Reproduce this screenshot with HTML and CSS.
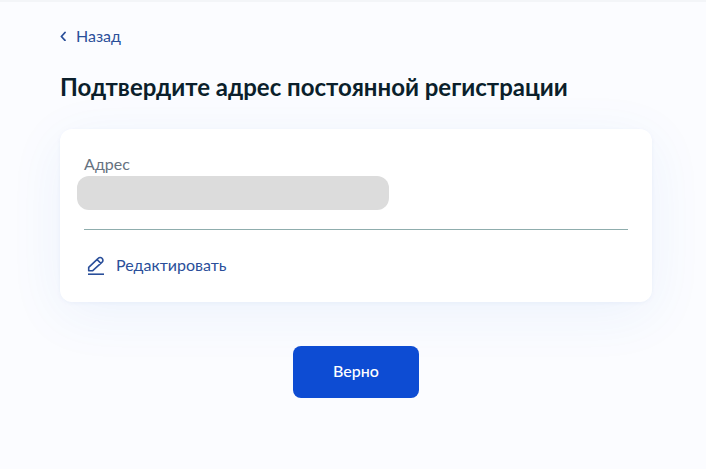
FILE: index.html
```html
<!DOCTYPE html>
<html lang="ru">
<head>
  <meta charset="UTF-8">
  <meta name="viewport" content="width=device-width, initial-scale=1.0">
  <title>Подтвердите адрес постоянной регистрации</title>
  <link rel="stylesheet" href="styles.css">
</head>
<body>
  <main class="page">
    <a href="#" class="back">
      <svg class="back-icon" width="6" height="10" viewBox="0 0 6 10" fill="none" stroke="currentColor" stroke-width="1.8" stroke-linecap="round" stroke-linejoin="round">
        <path d="M5 1.500 1.400 5.500 5 9.300"/>
      </svg>
      Назад
    </a>

    <h1>Подтвердите адрес постоянной регистрации</h1>

    <section class="card">
      <div class="label">Адрес</div>
      <div class="address"></div>
      <button type="button" class="edit">
        <svg width="24" height="24" viewBox="0 0 24 24" fill="none" stroke="currentColor" stroke-width="1.6" stroke-linejoin="round">
          <path d="M4 21.200h16"/>
          <path d="M4.700 17.800V14.300L14.200 5.300a2.700 2.700 0 0 1 3.900 0 2.700 2.700 0 0 1 0 3.900L8.500 17.800zM13 6.500l3.900 3.900"/>
        </svg>
        Редактировать
      </button>
    </section>

    <button type="button" class="submit">Верно</button>
  </main>
</body>
</html>
```
FILE: styles.css
```css
* {
  box-sizing: border-box;
}
body {
  margin: 0;
  min-height: 100vh;
  background: #fbfcff;
  border-top: 2px solid #f3f5f8;
  font-family: Lato, "Open Sans", sans-serif;
  font-size: 16px;
  line-height: 24px;
  color: #0b1f33;
}
button {
  font: inherit;
  border: none;
  cursor: pointer;
}
.page {
  display: flex;
  flex-direction: column;
  max-width: 712px;
  padding: 22px 54px 0 60px;
}
.back {
  display: flex;
  align-items: center;
  align-self: flex-start;
  gap: 10px;
  color: #2a4f9a;
  text-decoration: none;
}
h1 {
  margin: 23px 0 26px;
  font-size: 24px;
  line-height: 32px;
  font-weight: 700;
  color: #0b1f2b;
}
.card {
  padding: 23px 24px 24px;
  background: #fff;
  border-radius: 12px;
  box-shadow: 0 12px 56px rgba(38, 116, 216, 0.07), 0 1px 4px rgba(38, 80, 186, 0.05);
}
.label {
  color: #66727f;
}
.address {
  width: 312px;
  max-width: 100%;
  height: 34px;
  margin-left: -7px;
  background: #dcdcdc;
  border-radius: 12px;
}
.edit {
  display: flex;
  align-items: center;
  gap: 8px;
  width: 100%;
  margin-top: 19px;
  padding: 23px 0 1px;
  border-top: 1px solid #8fadad;
  background: none;
  color: #2a4f9a;
}
.submit {
  align-self: center;
  margin-top: 44px;
  padding: 13px 40px 15px;
  border-radius: 8px;
  background: #0d4cd3;
  color: #fff;
  font-weight: 500;
}
```
